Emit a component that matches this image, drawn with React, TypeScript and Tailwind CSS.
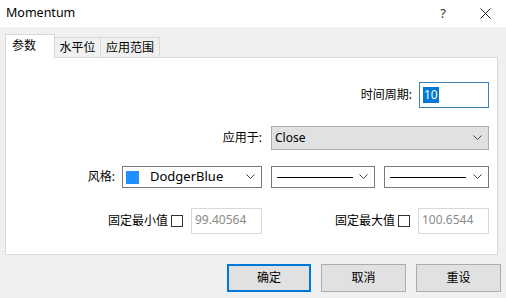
import React from "react";

const font = { fontFamily: '"Noto Sans", "Noto Sans CJK SC", sans-serif' };

function Chevron() {
  return (
    <svg width="9" height="6" viewBox="0 0 9 6" className="shrink-0">
      <path d="M0.5 0.5 L4.5 4.5 L8.5 0.5" fill="none" stroke="#444" strokeWidth="1" />
    </svg>
  );
}

export default function App() {
  return (
    <div className="w-[506px] h-[298px] bg-[#f0f0f0] flex flex-col text-[12px] text-black overflow-hidden" style={font}>
      {/* title bar */}
      <div className="h-[27px] bg-white flex items-center pl-[6px] shrink-0">
        <span className="text-[12.5px]">Momentum</span>
        <span className="ml-auto mr-[34px] text-[13px] text-[#333]">?</span>
        <svg width="11" height="11" viewBox="0 0 11 11" className="mr-[15px]">
          <path d="M0.5 0.5 L10.5 10.5 M10.5 0.5 L0.5 10.5" stroke="#222" strokeWidth="1" />
        </svg>
      </div>
      {/* tabs */}
      <div className="pl-[5px] pr-[8px] pt-[8px] flex flex-col shrink-0">
        <div className="flex items-end h-[22px]">
          <div className="w-[50px] h-[24px] bg-white border border-b-0 border-[#d9d9d9] pl-[6px] pt-[2px] relative z-10 -mb-px">
            参数
          </div>
          <div className="w-[46px] h-[20px] bg-[#f0f0f0] border border-b-0 border-l-0 border-[#d9d9d9] flex items-center justify-center">
            水平位
          </div>
          <div className="w-[59px] h-[20px] bg-[#f0f0f0] border border-b-0 border-l-0 border-[#d9d9d9] flex items-center justify-center">
            应用范围
          </div>
        </div>
      </div>
      <div className="mx-[5px] mr-[8px] h-[198px] bg-white border border-[#d9d9d9] flex flex-col shrink-0">
        {/* period */}
        <div className="flex items-center justify-end mt-[24px] pr-[8px]">
          <span className="mr-[7px]">时间周期:</span>
          <div className="w-[70px] h-[26px] border border-[#3c7fb1] flex items-center px-[3px]">
            <span className="bg-[#0078d7] text-white px-[1px] leading-[16px]">10</span>
          </div>
        </div>
        {/* apply */}
        <div className="flex items-center justify-end mt-[18px] pr-[8px]">
          <span className="mr-[9px]">应用于:</span>
          <div className="w-[218px] h-[24px] bg-[#e1e1e1] border border-[#adadad] flex items-center pl-[3px] pr-[6px]">
            <span>Close</span>
            <span className="ml-auto"><Chevron /></span>
          </div>
        </div>
        {/* style */}
        <div className="flex items-center justify-end mt-[16px] pr-[8px]">
          <span className="mr-[7px]">风格:</span>
          <div className="w-[140px] h-[22px] bg-white border border-[#7a7a7a] flex items-center pl-[3px] pr-[6px]">
            <span className="w-[13px] h-[13px] bg-[#1e90ff] mr-[11px]" />
            <span className="text-[13px]">DodgerBlue</span>
            <span className="ml-auto"><Chevron /></span>
          </div>
          <div className="ml-[9px] w-[104px] h-[22px] bg-white border border-[#7a7a7a] flex items-center pl-[5px] pr-[6px]">
            <span className="w-[76px] h-px bg-black" />
            <span className="ml-auto"><Chevron /></span>
          </div>
          <div className="ml-[9px] w-[105px] h-[22px] bg-white border border-[#7a7a7a] flex items-center pl-[5px] pr-[6px]">
            <span className="w-[76px] h-px bg-black" />
            <span className="ml-auto"><Chevron /></span>
          </div>
        </div>
        {/* min/max */}
        <div className="flex items-center justify-end mt-[20px] pr-[8px]">
          <span>固定最小值</span>
          <span className="ml-[3px] w-[12px] h-[12px] border border-[#333] bg-white" />
          <div className="ml-[8px] w-[71px] h-[26px] border border-[#d9d9d9] flex items-center pl-[3px] pb-[3px] text-[#8a8a8a]">
            99.40564
          </div>
          <span className="ml-[73px]">固定最大值</span>
          <span className="ml-[3px] w-[12px] h-[12px] border border-[#333] bg-white" />
          <div className="ml-[8px] w-[71px] h-[26px] border border-[#d9d9d9] flex items-center pl-[3px] pb-[3px] text-[#8a8a8a]">
            100.6544
          </div>
        </div>
      </div>
      {/* buttons */}
      <div className="flex justify-end gap-[10px] pr-[5px] mt-[9px]">
        <div className="w-[84px] h-[28px] bg-[#e1e1e1] border-2 border-[#0078d7] flex items-center justify-center">确定</div>
        <div className="w-[85px] h-[28px] bg-[#e1e1e1] border border-[#adadad] flex items-center justify-center">取消</div>
        <div className="w-[85px] h-[28px] bg-[#e1e1e1] border border-[#adadad] flex items-center justify-center">重设</div>
      </div>
    </div>
  );
}
